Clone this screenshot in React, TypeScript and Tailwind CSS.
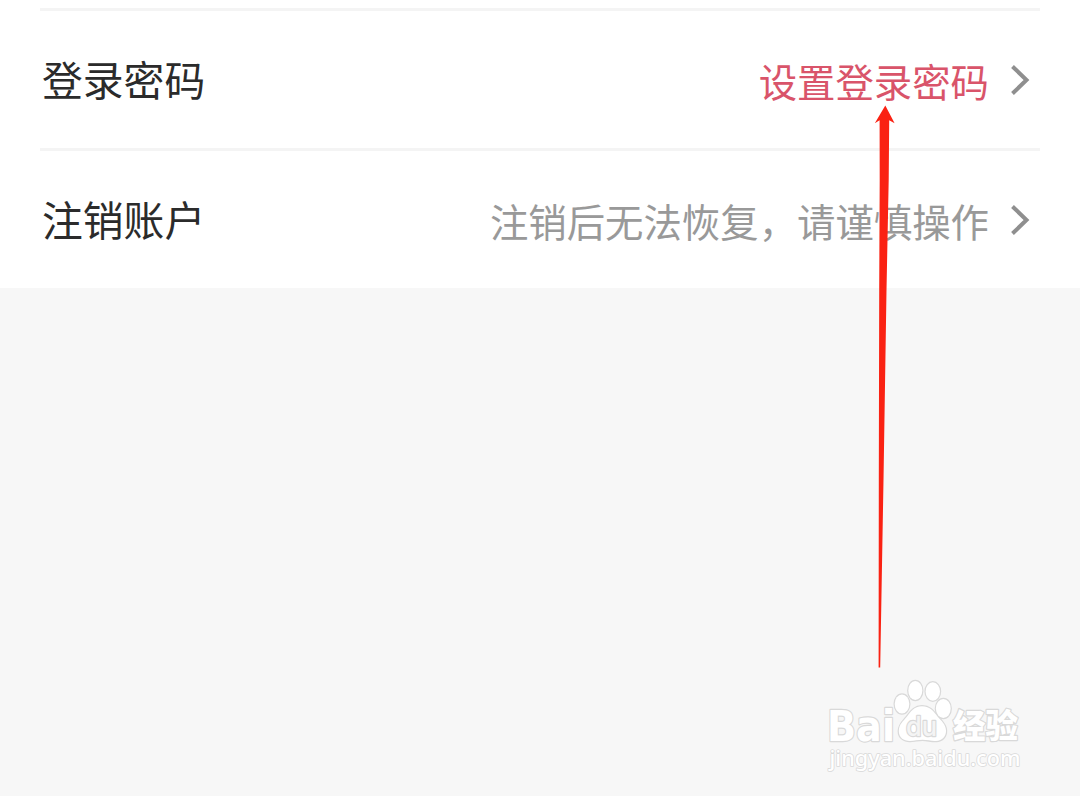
import React from 'react';

interface SettingRow {
  label: string;
  value: string;
  valueClass: string;
}

const rows: SettingRow[] = [
  { label: '登录密码', value: '设置登录密码', valueClass: 'text-[#d9546a]' },
  { label: '注销账户', value: '注销后无法恢复，请谨慎操作', valueClass: 'text-[#999999]' },
];

const ChevronIcon: React.FC = () => (
  <svg className="ml-[21px] h-[30px] w-[20px]" viewBox="0 0 20 30" fill="none">
    <path d="M2.5 1.5 L16.5 15 L2.5 28.5" stroke="#8f8f8f" strokeWidth="4" />
  </svg>
);

/* Long thin pointer that tapers towards its tail */
const PointerArrow: React.FC = () => (
  <svg className="pointer-events-none absolute left-[870px] top-[100px] h-[572px] w-[30px]" viewBox="870 100 30 572">
    <path
      d="M885.3 105.5 L894.6 123.3 L889.2 120.2 L888.7 180 L886.5 290 L883.5 480 L880.2 667.5 L878.6 667.5 L878.8 480 L879.2 290 L879.7 180 L879.6 120.2 L874.8 123.3 Z"
      fill="#fa2213"
    />
  </svg>
);

const Watermark: React.FC = () => (
  <svg
    className="pointer-events-none absolute left-[815px] top-[670px] h-[115px] w-[220px]"
    viewBox="0 0 220 115"
    fill="#ffffff"
    stroke="#d9d9d9"
    strokeWidth="2.4"
    strokeLinejoin="round"
    paintOrder="stroke"
  >
    <text x="12" y="70.5" fontSize="42" fontWeight="700" textLength="68" lengthAdjust="spacingAndGlyphs" fontFamily="'DejaVu Sans', sans-serif">
      Bai
    </text>
    <ellipse cx="87" cy="34" rx="7.3" ry="9.5" />
    <ellipse cx="100.3" cy="20.5" rx="7" ry="9.5" />
    <ellipse cx="117.8" cy="21.5" rx="7.2" ry="9.3" />
    <ellipse cx="128.3" cy="38.5" rx="7.4" ry="9.5" />
    <path d="M107 36.3 C99 36.3 95.5 42 92 46.5 C88 51.5 83.8 54.5 83.8 61 C83.8 67.5 88.5 71 95 71 C100 71 102.5 69.8 107.5 69.8 C113 69.8 116 71.3 121 71 C127.5 70.5 131.2 66.5 131 60.5 C130.8 54.5 126.5 51 122.5 46.5 C118.5 41.5 115.5 36.3 107 36.3 Z" />
    <text x="91" y="65.5" fontSize="27" fontWeight="500" fill="#f4f4f4" textLength="31" lengthAdjust="spacingAndGlyphs" fontFamily="Inter, sans-serif">
      du
    </text>
    <text x="138" y="68" fontSize="33" fontWeight="900" textLength="65" lengthAdjust="spacingAndGlyphs" fontFamily="'Noto Sans CJK SC', sans-serif">
      经验
    </text>
    <text x="14.5" y="96" fontSize="22" fontWeight="500" strokeWidth="1.6" textLength="191" lengthAdjust="spacingAndGlyphs" fontFamily="'Noto Sans', sans-serif">
      jingyan.baidu.com
    </text>
  </svg>
);

const App: React.FC = () => {
  return (
    <div className="relative h-[796px] w-[1080px] overflow-hidden bg-[#f7f7f7] font-['Noto_Sans_CJK_SC',sans-serif]">
      <div className="h-[288px] bg-white pt-2">
        {rows.map((row) => (
          <div key={row.label} className="mx-10 flex h-[140px] items-center justify-between border-t-[3px] border-[#f4f4f4] pl-0.5 pt-px">
            <span className="mb-0.5 text-[40.8px] leading-none text-[#2b2b2b]">{row.label}</span>
            <div className="flex items-center pr-[10px]">
              <span className={`text-[38.4px] leading-none ${row.valueClass}`}>{row.value}</span>
              <ChevronIcon />
            </div>
          </div>
        ))}
      </div>

      <PointerArrow />
      <Watermark />
    </div>
  );
};

export default App;
